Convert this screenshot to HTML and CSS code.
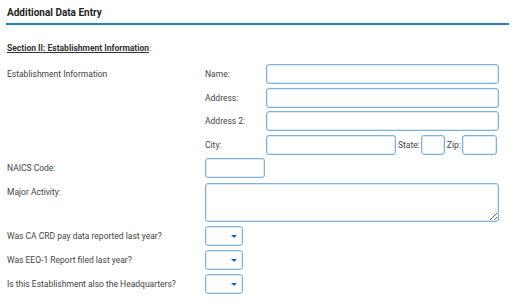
FILE: index.html
```html
<!DOCTYPE html>
<html>
<head>
<meta charset="utf-8">
<link rel="stylesheet" href="styles.css">
</head>
<body>
<div class="page">
  <div class="header"><h1 class="title">Additional Data Entry</h1></div>
  <div class="section-title"><span class="section-name">Section II: Establishment Information</span>:</div>
  <div class="form">
    <div class="label">Establishment Information</div>
    <div class="address">
      <div class="sublabel">Name:</div>
      <input class="field" type="text">
      <div class="sublabel">Address:</div>
      <input class="field" type="text">
      <div class="sublabel">Address 2:</div>
      <input class="field" type="text">
      <div class="sublabel">City:</div>
      <div class="city-row">
        <input class="field city" type="text">
        <span class="inline-label">State:</span>
        <input class="field state" type="text">
        <span class="inline-label">Zip:</span>
        <input class="field zip" type="text">
      </div>
    </div>

    <div class="label">NAICS Code:</div>
    <div><input class="field naics" type="text"></div>

    <div class="label top">Major Activity:</div>
    <div><textarea class="field area"></textarea></div>

    <div class="label">Was CA CRD pay data reported last year?</div>
    <div><div class="select"><span class="caret"></span></div></div>

    <div class="label">Was EEO-1 Report filed last year?</div>
    <div><div class="select"><span class="caret"></span></div></div>

    <div class="label">Is this Establishment also the Headquarters?</div>
    <div><div class="select"><span class="caret"></span></div></div>
  </div>
</div>
</body>
</html>
```
FILE: styles.css
```css
* { box-sizing: border-box; }
html, body { margin: 0; padding: 0; background: #fff; }
body {
  font-family: Roboto, "Liberation Sans", sans-serif;
  color: #444;
  font-size: 8.5px;
}
.page { padding: 0 7px 0 6px; }
.header {
  height: 25px;
  border-bottom: 2px solid #2b7cc0;
  display: flex;
  align-items: center;
  padding-left: 1px;
  padding-top: 1px;
}
.title {
  margin: 0;
  font-size: 10px;
  font-weight: 700;
  color: #222;
}
.section-title {
  margin-top: 18px;
  padding-left: 1px;
  color: #333;
}
.section-name {
  font-weight: 700;
  text-decoration: underline;
}
.form {
  margin-top: 11px;
  display: grid;
  grid-template-columns: 198px 1fr;
  row-gap: 4px;
  padding-left: 1px;
}
.label {
  display: flex;
  align-items: center;
  height: 20px;
  align-self: start;
}
.label.top { align-self: start; }
.address {
  display: grid;
  grid-template-columns: 61px 233px;
  row-gap: 3.5px;
  margin-bottom: -1px;
}
.sublabel {
  display: flex;
  align-items: center;
  height: 20px;
}
.field {
  display: block;
  height: 20px;
  border: 1px solid #7fb2da;
  border-radius: 3px;
  background: #fff;
  margin: 0;
  padding: 0;
  font: inherit;
  box-shadow: inset 0 0 0 0.5px #b9d6ec;
}
.address > .field { width: 233px; }
.city-row {
  display: flex;
  align-items: center;
}
.city { width: 130px; }
.inline-label { margin: 0 1px 0 2px; }
.state { width: 24px; }
.zip { width: 35px; }
.naics { width: 60px; }
.area {
  width: 294px;
  height: 39px;
  resize: vertical;
  margin-top: 1px;
}
.select {
  width: 38px;
  height: 20px;
  border: 1px solid #7fb2da;
  border-radius: 3px;
  position: relative;
  box-shadow: inset 0 0 0 0.5px #b9d6ec;
}
.caret {
  position: absolute;
  right: 5px;
  top: 8px;
  width: 0;
  height: 0;
  border-left: 3px solid transparent;
  border-right: 3px solid transparent;
  border-top: 3px solid #1f68aa;
}
```
